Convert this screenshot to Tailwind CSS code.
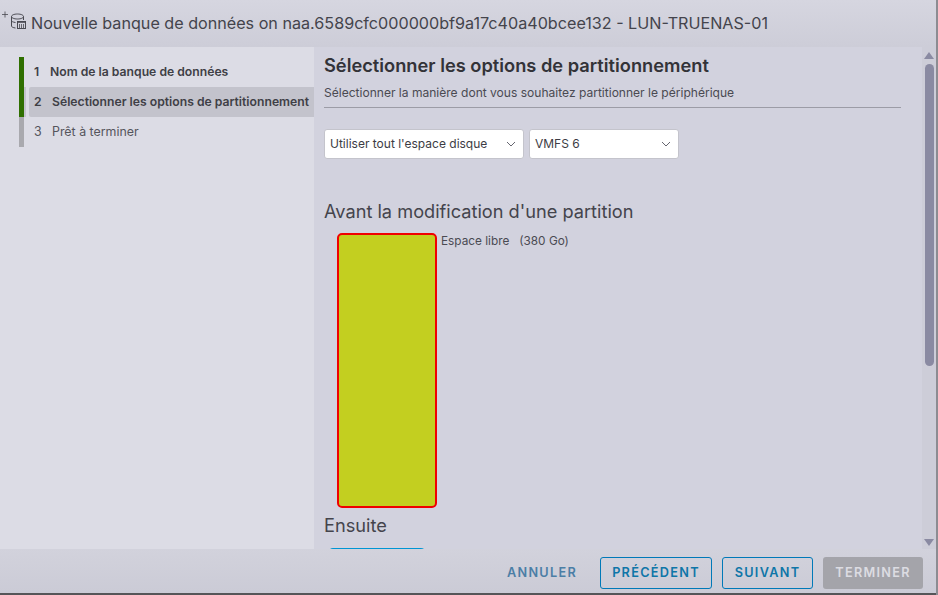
<!DOCTYPE html>
<html lang="fr">
<head>
    <meta charset="UTF-8">
    <title>Nouvelle banque de données</title>
    <script src="https://cdn.jsdelivr.net/npm/@tailwindcss/browser@4"></script>
</head>
<body class="w-[938px] h-[595px] overflow-hidden bg-[#d2d2de] font-['Inter','Noto_Sans',sans-serif] text-[#3f3f46]">
    <div class="flex flex-col h-[593px] w-[936px] bg-[#d2d2de]">
        <!-- header -->
        <div class="flex items-center h-[47px] shrink-0 bg-linear-to-b from-[#d6d6e0] to-[#cdcdd8]">
            <svg class="w-[31px] h-[24px] shrink-0 -mt-[4px]" viewBox="0 0 31 24" fill="none" stroke="#4a4a52" stroke-width="1">
                <path d="M2 4.5h6M5 1.5v6" stroke-width="0.8"/>
                <path d="M11.5 8v-1.5c0-1.4 2.6-2.5 6-2.5s6 1.1 6 2.5v3.5M11.5 6.5c0 1.4 2.6 2.5 6 2.5s6-1.1 6-2.5M11.5 8v8c0 1 1.5 1.7 4 2M11.5 10.5c0 1 1.5 1.7 4 2"/>
                <rect x="17.5" y="11.5" width="8" height="7" fill="#d2d2dc"/>
                <path d="M17.5 12h8" stroke-width="1.6"/>
                <path d="M19.5 14v4M21.5 14v4M23.5 14v4" stroke-width="0.8"/>
            </svg>
            <h1 class="text-[16.15px] font-normal whitespace-nowrap text-[#44444c]">Nouvelle banque de données on naa.6589cfc000000bf9a17c40a40bcee132 - LUN-TRUENAS-01</h1>
        </div>

        <div class="flex flex-1 min-h-0">
            <!-- steps -->
            <nav class="w-[314px] shrink-0 bg-[#dcdce5] pt-[10px] pl-[19px]">
                <div class="flex flex-col text-[12.2px] leading-[30px]">
                    <div class="flex h-[30px] border-l-[5px] border-[#2f6f00]">
                        <div class="flex pl-[10px] font-semibold"><span class="w-[16px]">1</span><span>Nom de la banque de données</span></div>
                    </div>
                    <div class="flex h-[30px] border-l-[5px] border-[#2f6f00]">
                        <div class="w-[2px] shrink-0 bg-[#c3c3cc]"></div>
                        <div class="flex flex-1 ml-[3px] pl-[5px] font-semibold bg-[#c3c3cc] rounded-l-[2px]"><span class="w-[18px]">2</span><span class="whitespace-nowrap">Sélectionner les options de partitionnement</span></div>
                    </div>
                    <div class="flex h-[30px] border-l-[5px] border-[#a9a9ae]">
                        <div class="flex pl-[10px] text-[#55555c] text-[12.4px]"><span class="w-[18px]">3</span><span>Prêt à terminer</span></div>
                    </div>
                </div>
            </nav>

            <!-- content -->
            <main class="flex-1 min-w-0 overflow-hidden pl-[10px] pr-[21px] pt-[7px]">
                <h2 class="text-[18.25px] leading-[22px] font-semibold text-[#333338] whitespace-nowrap">Sélectionner les options de partitionnement</h2>
                <p class="text-[12.05px] leading-[16px] mt-[9px] pb-[6px] border-b border-[#9c9ca6] whitespace-nowrap text-[#4a4a52]">Sélectionner la manière dont vous souhaitez partitionner le périphérique</p>

                <div class="flex gap-[5px] mt-[21px]">
                    <div class="flex items-center justify-between w-[200px] h-[30px] bg-white rounded-[3px] border border-[#c4c4cc] pl-[5px] pr-[7px] text-[12px] text-[#3c3c44]">
                        <span class="whitespace-nowrap">Utiliser tout l'espace disque</span>
                        <svg class="w-[10px] h-[6px]" viewBox="0 0 10 6" fill="none" stroke="#666670"><path d="M1 1l4 4 4-4"/></svg>
                    </div>
                    <div class="flex items-center justify-between w-[150px] h-[30px] bg-white rounded-[3px] border border-[#c4c4cc] pl-[5px] pr-[7px] text-[12px] text-[#3c3c44]">
                        <span>VMFS 6</span>
                        <svg class="w-[10px] h-[6px]" viewBox="0 0 10 6" fill="none" stroke="#666670"><path d="M1 1l4 4 4-4"/></svg>
                    </div>
                </div>

                <h3 class="text-[18.2px] leading-[22px] font-normal mt-[41px] whitespace-nowrap text-[#44444c]">Avant la modification d'une partition</h3>
                <div class="flex mt-[11px] ml-[13px]">
                    <div class="w-[100px] h-[275px] bg-[#c3cf20] border-2 border-[#f00000] rounded-[5px]"></div>
                    <div class="ml-[4px] mt-[1px] text-[11.8px] leading-[14px] whitespace-nowrap text-[#4a4a52]">Espace libre&nbsp;&nbsp;&nbsp;(380 Go)</div>
                </div>

                <h3 class="text-[18.2px] leading-[22px] font-normal mt-[6px] text-[#44444c]">Ensuite</h3>
                <div class="ml-[4px] mt-[12px] w-[98px] h-[20px] border-t-2 border-[#0095d3] rounded-t-[5px]"></div>
            </main>

            <!-- scrollbar -->
            <div class="flex flex-col items-center w-[14px] shrink-0 bg-[#cdcdd8]">
                <svg class="w-[10px] h-[7px] mt-[5px] shrink-0" viewBox="0 0 10 7" fill="#8a8aa2"><path d="M5 0l5 7H0z"/></svg>
                <div class="w-[9px] h-[302px] mt-[5px] bg-[#8a8aa2] rounded-full"></div>
                <svg class="w-[10px] h-[7px] mt-auto mb-[3px] shrink-0" viewBox="0 0 10 7" fill="#8a8aa2"><path d="M0 0h10L5 7z"/></svg>
            </div>
        </div>

        <!-- footer -->
        <div class="flex items-end justify-end gap-[10px] h-[44px] shrink-0 pr-[13px] pb-[4px] bg-linear-to-b from-[#d2d2dc] to-[#cbcbd6] text-[12.7px] font-semibold tracking-[1.3px]">
            <button class="h-[32px] px-[12px] mr-[1px] text-[#4b7ea6]">ANNULER</button>
            <button class="w-[112px] h-[32px] rounded-[3px] border border-[#0079b8] text-[#0f76a8]">PRÉCÉDENT</button>
            <button class="w-[91px] h-[32px] rounded-[3px] border border-[#0079b8] text-[#0f76a8]">SUIVANT</button>
            <button class="w-[100px] h-[32px] rounded-[3px] bg-[#a4a4aa] text-[#dcdce2]">TERMINER</button>
        </div>
    </div>
    <div class="absolute left-0 top-[593px] w-[938px] h-[2px] bg-[#555558]"></div>
    <div class="absolute left-[936px] top-0 w-[2px] h-[595px] bg-[#8c8c92]"></div>
</body>
</html>
